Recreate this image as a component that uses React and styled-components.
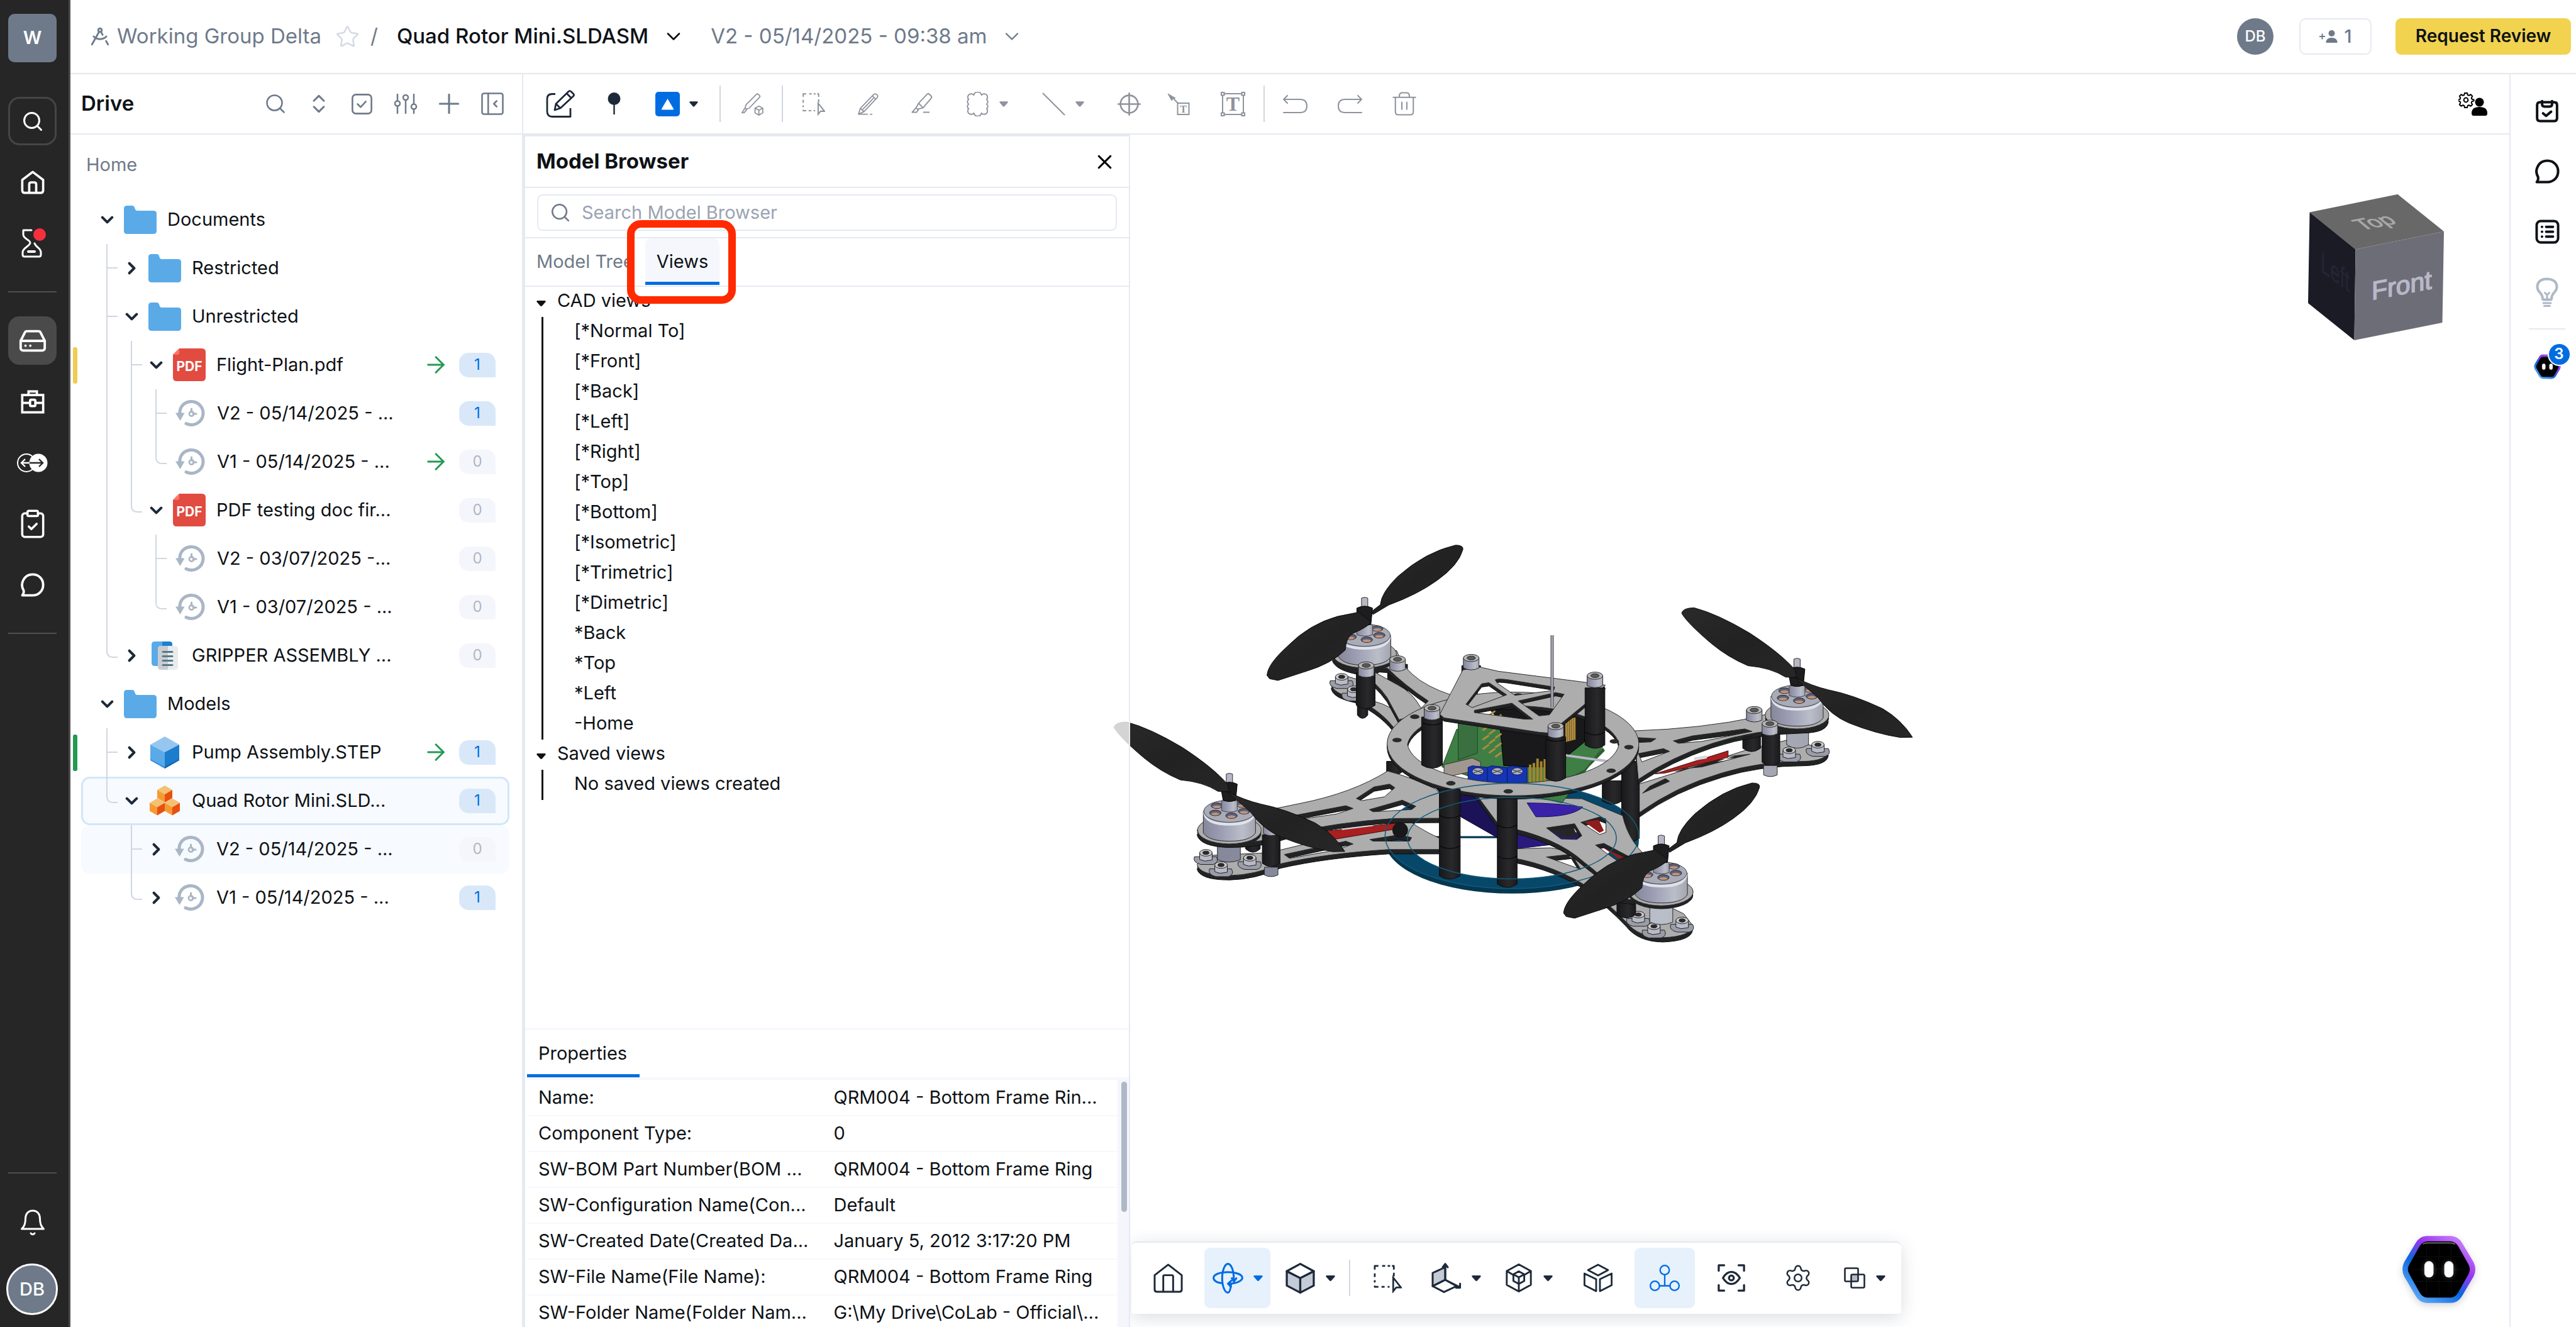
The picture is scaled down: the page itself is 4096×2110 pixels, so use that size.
import React, { useState } from 'react';
import styled, { createGlobalStyle } from 'styled-components';
import {
  Search,
  HardDrive,
  ClipboardCheck,
  Star,
  ChevronDown,
  ChevronRight,
  ChevronsUpDown,
  Plus,
  X,
  ArrowRight,
  DraftingCompass,
  Settings,
} from 'lucide-react';

const GlobalStyle = createGlobalStyle`
  * {
    box-sizing: border-box;
  }
  body {
    margin: 0;
    background: #ffffff;
    color: #0e1216;
    font-family: Inter, 'Liberation Sans', sans-serif;
    font-size: 29px;
    line-height: 1.2;
  }
  button, input {
    font: inherit;
    color: inherit;
    border: 0;
    padding: 0;
    background: none;
  }
  ul {
    list-style: none;
    margin: 0;
    padding: 0;
  }
  svg {
    display: block;
    flex: none;
  }
`;

const Shell = styled.div`
  display: flex;
  height: 100vh;
  overflow: hidden;
`;

/* ---------- left rail ---------- */

const Rail = styled.nav`
  flex: none;
  display: flex;
  flex-direction: column;
  width: 112px;
  padding: 22px 19px 19px 13px;
  background: #262626;
  border-right: 3px solid #4a4a4a;
  color: #ffffff;
`;

const Logo = styled.button`
  width: 77px;
  height: 77px;
  margin-bottom: 55px;
  border-radius: 10px;
  background: #6e7a8a;
  font-size: 29px;
  font-weight: 600;
`;

const RailGroup = styled.div`
  display: flex;
  flex-direction: column;
  gap: 20px;
`;

const RailButton = styled.button`
  display: flex;
  align-items: center;
  justify-content: center;
  width: 77px;
  height: 77px;
  border-radius: 18px;
  border: 3px solid ${(p) => (p.$outlined ? '#454545' : 'transparent')};
  background: ${(p) => (p.$active ? '#4a4a4a' : 'transparent')};
  background-clip: border-box;
`;

const RailDivider = styled.hr`
  width: 77px;
  margin: ${(p) => (p.$last ? '0 0 39px' : '38px 0')};
  border: 0;
  border-top: 2px solid #4f4f4f;
`;

const RailFoot = styled.div`
  margin-top: auto;
  display: flex;
  flex-direction: column;
`;

const RailAvatar = styled.button`
  width: 82px;
  height: 82px;
  margin: 27px 0 0 -3px;
  border-radius: 50%;
  border: 3px solid #ffffff;
  background: #6e7a8a;
  font-size: 29px;
  font-weight: 500;
`;

/* ---------- header ---------- */

const Main = styled.div`
  flex: 1;
  min-width: 0;
  display: flex;
  flex-direction: column;
`;

const Header = styled.header`
  flex: none;
  display: flex;
  align-items: center;
  height: 118px;
  padding: 0 8px 0 30px;
  border-bottom: 2px solid #e6e7e8;
  font-size: 33px;
`;

const GroupLink = styled.a`
  display: flex;
  align-items: center;
  gap: 10px;
  color: #6e7a8a;
  text-decoration: none;
`;

const StarButton = styled.button`
  margin: 0 17px 0 22px;
  color: #d3d9e4;
`;

const Slash = styled.span`
  margin-right: 30px;
  color: #6e7a8a;
`;

const Picker = styled.button`
  display: flex;
  align-items: center;
  gap: 22px;
  margin-right: 41px;
  font-weight: ${(p) => (p.$muted ? 400 : 500)};
  color: ${(p) => (p.$muted ? '#6e7a8a' : '#0e1216')};
`;

const HeaderEnd = styled.div`
  display: flex;
  align-items: center;
  margin-left: auto;
  font-size: 29px;
`;

const Avatar = styled.span`
  display: flex;
  align-items: center;
  justify-content: center;
  width: 58px;
  height: 58px;
  margin-right: 41px;
  border-radius: 50%;
  background: #6e7a8a;
  color: #ffffff;
  font-size: 24px;
  font-weight: 500;
`;

const InviteButton = styled.button`
  display: flex;
  align-items: center;
  justify-content: center;
  gap: 10px;
  width: 115px;
  height: 58px;
  margin-right: 38px;
  border: 2px solid #e6e9f1;
  border-radius: 10px;
  color: #6e7a8a;
  font-weight: 500;
`;

const ReviewButton = styled.button`
  width: 279px;
  height: 58px;
  border-radius: 9px;
  background: #f1d350;
  font-size: 28px;
  font-weight: 600;
`;

const Body = styled.div`
  flex: 1;
  min-height: 0;
  display: flex;
`;

/* ---------- drive panel ---------- */

const Drive = styled.aside`
  flex: none;
  display: flex;
  flex-direction: column;
  width: 720px;
  border-right: 2px solid #e6e9f1;
`;

const DriveBar = styled.div`
  flex: none;
  display: flex;
  align-items: center;
  height: 96px;
  padding: 0 13px 0 17px;
  border-bottom: 2px solid #e6e9f1;
`;

const DriveTitle = styled.h2`
  margin: 0 auto 0 0;
  font-size: 33px;
  font-weight: 600;
`;

const DriveAction = styled.button`
  display: flex;
  justify-content: center;
  width: 69px;
  color: #6e7a8a;
`;

const HomeLink = styled.a`
  padding: 31px 25px;
  color: #6e7a8a;
  text-decoration: none;
`;

const Tree = styled.ul`
  padding: 0 20px 0 17px;
`;

const TreeRow = styled.li`
  position: relative;
  display: flex;
  align-items: center;
  height: 77px;
  padding: 0 22px;
  border-radius: 14px;
  background: ${(p) => (p.$state ? '#f7fafe' : 'transparent')};
  box-shadow: ${(p) =>
    p.$state === 'selected' ? 'inset 0 0 0 3px #d2e6f9' : 'none'};
`;

const StatusBar = styled.span`
  position: absolute;
  left: -13px;
  top: 10px;
  width: 7px;
  height: 58px;
  border-radius: 3px;
  background: ${(p) => p.$color};
`;

const GuideCell = styled.span`
  flex: none;
  align-self: stretch;
  width: 39px;
  color: #d0d7e2;
`;

const Toggle = styled.button`
  display: flex;
  justify-content: center;
  width: 38px;
  color: #1d2939;
`;

const FileIcon = styled.span`
  display: flex;
  justify-content: center;
  width: 52px;
  margin: 0 17px 0 8px;
`;

const FileName = styled.span`
  flex: 1;
  white-space: nowrap;
`;

const Count = styled.span`
  display: flex;
  align-items: center;
  justify-content: center;
  width: 58px;
  height: 39px;
  margin-left: 16px;
  border-radius: 15px 15px 0 15px;
  background: ${(p) => (p.$on ? '#d8e8f9' : '#f4f6fb')};
  color: ${(p) => (p.$on ? '#006ce2' : '#aeb8c6')};
  font-size: 24px;
`;

/* ---------- workspace ---------- */

const Workspace = styled.section`
  flex: 1;
  min-width: 0;
  display: flex;
  flex-direction: column;
`;

const Toolbar = styled.div`
  flex: none;
  display: flex;
  align-items: center;
  height: 96px;
  padding: 0 34px 0 12px;
  border-bottom: 2px solid #e6e9f1;
`;

const Tool = styled.button`
  display: flex;
  align-items: center;
  justify-content: flex-start;
  gap: 15px;
  width: ${(p) => (p.$menu ? 121 : p.$tight ? 77 : 87)}px;
  padding-left: ${(p) => (p.$tight ? 16 : 24)}px;
  color: ${(p) => (p.$dark ? '#1d2939' : '#8e939c')};
`;

const ToolDivider = styled.span`
  width: 2px;
  height: 58px;
  margin: ${(p) => (p.$wide ? '0' : '0 5px')};
  background: #d0d7e2;
`;

const UserTool = styled.button`
  margin-left: auto;
  color: #000000;
`;

const Split = styled.div`
  flex: 1;
  min-height: 0;
  display: flex;
`;

const Panel = styled.section`
  position: relative;
  z-index: 1;
  flex: none;
  display: flex;
  flex-direction: column;
  width: 965px;
  border: 2px solid #e6e9f1;
  border-width: 3px 2px 0 3px;
  background: rgba(255, 255, 255, 0.8);
`;

const PanelHead = styled.div`
  display: flex;
  align-items: center;
  justify-content: space-between;
  height: 82px;
  padding: 0 20px 0 18px;
  border-bottom: 2px solid #e6e9f1;
`;

const PanelTitle = styled.h2`
  margin: 0;
  font-size: 33px;
  font-weight: 700;
`;

const SearchRow = styled.div`
  padding: 10px 19px;
  border-bottom: 2px solid #e6e9f1;
`;

const SearchBox = styled.label`
  display: flex;
  align-items: center;
  gap: 17px;
  height: 58px;
  padding: 0 18px;
  border: 2px solid #e6e9f1;
  border-radius: 9px;
  color: #6e7a8a;
`;

const SearchInput = styled.input`
  flex: 1;
  outline: 0;
  &::placeholder {
    color: #9aa3b2;
    opacity: 1;
  }
`;

const Tabs = styled.div`
  position: relative;
  display: flex;
  height: 77px;
  padding-bottom: 1px;
  border-bottom: 2px solid #e6e9f1;
`;

const Tab = styled.button`
  padding: 5px 18px 0;
  border-radius: 10px 10px 0 0;
  border-bottom: 5px solid ${(p) => (p.$active ? '#006ce2' : 'transparent')};
  background: ${(p) => (p.$active ? '#f5f7fc' : 'transparent')};
  color: ${(p) => (p.$active ? '#0e1216' : '#6e7a8a')};
`;

const Highlight = styled.span`
  position: absolute;
  left: 162px;
  top: -29px;
  width: 173px;
  height: 133px;
  border: 12px solid #ff2a00;
  border-radius: 22px;
  pointer-events: none;
`;

const ViewList = styled.div`
  flex: 1;
  min-height: 0;
  padding: 0 17px;
`;

const ViewGroup = styled.button`
  display: flex;
  align-items: center;
  gap: 17px;
  height: 48px;
  padding-bottom: 3px;
`;

const GroupCaret = styled.span`
  padding-top: 8px;
`;

const ViewItems = styled.ul`
  margin-left: 9px;
  border-left: 3px solid #0e1216;
`;

const ViewItem = styled.li`
  height: 48px;
  padding-left: 49px;
  line-height: 43px;
`;

const Props = styled.div`
  flex: none;
  height: 476px;
  overflow: hidden;
  padding-left: 3px;
  border-top: 4px solid #f7f8fd;
`;

const PropTabs = styled.div`
  display: flex;
  height: 79px;
  border-bottom: 4px solid #f7f8fd;
`;

const PropTab = styled.button`
  width: 179px;
  padding: 5px 0 0 18px;
  border-bottom: 5px solid #006ce2;
  text-align: left;
`;

const PropBody = styled.div`
  display: flex;
  align-items: stretch;
`;

const PropTable = styled.table`
  flex: 1;
  table-layout: fixed;
  border-collapse: collapse;
  tr {
    height: 57px;
    border-bottom: 2px solid #f7f8fd;
  }
  th,
  td {
    width: 50%;
    padding: 0 0 0 18px;
    font-weight: 400;
    text-align: left;
    white-space: nowrap;
  }
`;

const ScrollTrack = styled.div`
  width: 18px;
  padding: 3px 3px 0 6px;
  background: #f4f6fc;
`;

const ScrollThumb = styled.div`
  height: 207px;
  border-radius: 5px;
  background: #aeb8c6;
`;

const Stage = styled.div`
  position: relative;
  flex: 1;
  min-width: 0;
`;

const ModelDrawing = styled.svg`
  position: absolute;
  left: -29px;
  top: 622px;
  path,
  ellipse,
  line,
  rect {
    vector-effect: non-scaling-stroke;
  }
`;

const CubeDrawing = styled.svg`
  position: absolute;
  right: 103px;
  top: 95px;
`;

const Dock = styled.div`
  position: absolute;
  left: 2px;
  bottom: 21px;
  display: flex;
  align-items: center;
  gap: 10px;
  padding: 8px 10px 9px;
  border-top: 2px solid #e4e8f0;
  border-radius: 8px 8px 4px 4px;
  background: #ffffff;
  box-shadow: 0 6px 28px rgba(30, 41, 70, 0.16);
`;

const DockButton = styled.button`
  display: flex;
  align-items: center;
  justify-content: center;
  gap: 16px;
  width: ${(p) => (p.$menu ? 105 : 96)}px;
  height: 96px;
  border-radius: 9px;
  background: ${(p) => (p.$active ? '#e6f1fc' : 'transparent')};
  color: ${(p) => (p.$active ? '#006ce2' : '#1d2939')};
`;

const Assistant = styled.button`
  position: absolute;
  right: 53px;
  bottom: 37px;
  filter: drop-shadow(0 4px 6px rgba(0, 0, 0, 0.16));
`;

/* ---------- right rail ---------- */

const SideRail = styled.aside`
  flex: none;
  display: flex;
  flex-direction: column;
  align-items: center;
  width: 106px;
  padding: 20px 0 0 12px;
  border-left: 2px solid #e6e9f1;
`;

const SideButton = styled.button`
  position: relative;
  display: flex;
  align-items: center;
  justify-content: center;
  width: 77px;
  height: 77px;
  margin-bottom: 19px;
  color: ${(p) => (p.$off ? '#aeb8c6' : '#0e1216')};
`;

const SideDivider = styled.hr`
  width: 58px;
  margin: 0 0 20px;
  border: 0;
  border-top: 2px solid #e6e9f1;
`;

const Badge = styled.span`
  position: absolute;
  right: 1px;
  top: 1px;
  width: 37px;
  height: 37px;
  border: 2px solid #ffffff;
  border-radius: 50%;
  background: #006ce2;
  color: #ffffff;
  font-size: 24px;
  font-weight: 600;
  line-height: 32px;
`;

/* ---------- icons ---------- */

const Icon = ({ size = 38, width, height, box = 24, sw = 1.5, children }) => (
  <svg
    width={width || size}
    height={height || size}
    viewBox={`0 0 ${box} ${box}`}
    fill="none"
    stroke="currentColor"
    strokeWidth={sw}
    strokeLinecap="round"
    strokeLinejoin="round"
    aria-hidden="true"
  >
    {children}
  </svg>
);

const Caret = ({ size = 15 }) => (
  <svg width={size} height="9" viewBox="0 0 15 9" fill="currentColor">
    <path d="M1.5 0h12q2 .6.8 2.2L9 8.2q-1.500 1.500-3 0L.7 2.200Q-.5.6 1.500 0z" />
  </svg>
);

const FolderIcon = () => (
  <svg width="52" height="45" viewBox="0 0 52 45" fill="#5aaae8">
    <path d="M5 0h8q3 0 4 3l1 3q.8 2 3 2h26q5 0 5 5v27q0 5-5 5H5q-5 0-5-5V5q0-5 5-5z" />
  </svg>
);

const PdfIcon = () => (
  <svg width="52" height="52" viewBox="0 0 52 52">
    <path d="M10 0h36q6 0 6 6v40q0 6-6 6H6q-6 0-6-6V10z" fill="#e14b40" />
    <path d="M10 0v7q0 3-3 3H0z" fill="#ff7468" />
    <text
      x="26"
      y="36"
      textAnchor="middle"
      fill="#fff"
      fontFamily="Inter, sans-serif"
      fontWeight="700"
      fontSize="21"
    >
      PDF
    </text>
  </svg>
);

const HistoryIcon = () => (
  <svg width="47" height="42" viewBox="0 0 47 42" fill="none">
    <path
      d="M7 22C6 10 15 2.500 25.500 2.500A18.500 18.500 0 0 1 25.500 39.500Q21 39.500 17 37.500"
      stroke="#a9b6c5"
      strokeWidth="5"
      strokeLinecap="round"
    />
    <path d="M0 20.500h14.500L7.500 33z" fill="#a9b6c5" />
    <circle cx="25.500" cy="22" r="3.600" stroke="#a9b6c5" strokeWidth="2.600" />
    <path
      d="M25.500 14v5M28 22h5"
      stroke="#a9b6c5"
      strokeWidth="3"
      strokeLinecap="round"
    />
  </svg>
);

const DocSetIcon = () => (
  <svg width="42" height="45" viewBox="0 0 42 45">
    <path d="M5 0h23q5 0 5 5v34H5q-5 0-5-5V5q0-5 5-5z" fill="#5aaae8" />
    <path d="M17 0h11q5 0 5 5v4H17z" fill="#1f80d0" />
    <rect x="10" y="7" width="32" height="38" rx="5" fill="#e8ecef" />
    <path d="M26 7H15q-5 0-5 5v28q0 5 5 5h11z" fill="#c9cdd1" />
    <path
      d="M18 16.500h15M18 23.500h15M18 30.500h15M18 37.500h15"
      stroke="#577a86"
      strokeWidth="3"
      strokeLinecap="round"
    />
  </svg>
);

const PartIcon = () => (
  <svg width="46" height="51" viewBox="0 0 46 51">
    <path d="M23 0 46 13 23 25 0 13z" fill="#96c6ef" />
    <path d="M0 13 23 25v26L0 38z" fill="#5aaae8" />
    <path d="M46 13 23 25v26l23-13z" fill="#1b7dcc" />
    <path d="M0 36 23 48v3L0 38z" fill="#3c95df" />
    <path d="M46 36 23 48v3l23-13z" fill="#1566ad" />
  </svg>
);

const MiniCube = ({ x, y }) => (
  <g transform={`translate(${x} ${y})`}>
    <path d="M12 0 24 7 12 14 0 7z" fill="#f4c172" />
    <path d="M0 7 12 14v13L0 20z" fill="#f59a33" />
    <path d="M24 7 12 14v13l12-7z" fill="#e8500f" />
  </g>
);

const AssemblyIcon = () => (
  <svg width="48" height="48" viewBox="0 0 48 48">
    <MiniCube x={12} y={0} />
    <MiniCube x={0} y={20.500} />
    <MiniCube x={24} y={20.500} />
  </svg>
);

const Bubble = ({ size = 38, sw = 2.4 }) => (
  <Icon size={size} sw={sw}>
    <path d="M12 1.500c6 0 10.500 4.500 10.500 10.500S18 22.500 12 22.500H1.600c1.400-1.600 1.800-3 1.200-5.200A10.500 10.500 0 0 1 12 1.500z" />
  </Icon>
);

const BellIcon = () => (
  <svg
    width="40"
    height="42"
    viewBox="0 0 40 42"
    fill="none"
    stroke="#fff"
    strokeWidth="3"
    strokeLinecap="round"
    strokeLinejoin="round"
  >
    <path d="M2.500 31C7 27 8.500 22 8.500 15 8.500 7 13 2 20 2s11.500 5 11.500 13c0 7 1.500 12 6 16z" />
    <path d="M17 38q3 3.500 6 0" />
  </svg>
);

const Hourglass = () => (
  <svg
    width="42"
    height="47"
    viewBox="0 0 42 47"
    fill="none"
    stroke="#fff"
    strokeWidth="3"
    strokeLinecap="round"
    strokeLinejoin="round"
  >
    <path d="M19 3H6v7c0 7 11 8 11 13S5 31 5 38v4q0 3 3 3h23q3 0 3-3v-4c0-6-8-8-10-14" />
    <path d="M14 37h10" strokeWidth="4" />
    <circle cx="32" cy="10" r="10" fill="#f5303e" stroke="none" />
  </svg>
);

const Briefcase = () => (
  <Icon size={40} sw={2.2}>
    <path d="M8 5V2h8v3M2 5.500h20V22H2zM2 13h7M15 13h7" strokeLinejoin="miter" />
    <rect x="9.500" y="10" width="5" height="6" rx="1" />
  </Icon>
);

const CompareIcon = () => (
  <svg width="49" height="30" viewBox="0 0 49 30" fill="none">
    <circle cx="15" cy="15" r="14" stroke="#fff" strokeWidth="2" />
    <circle cx="34" cy="15" r="14.500" fill="#fff" />
    <path d="M20 15H8M13 9l-6 6 6 6" stroke="#fff" strokeWidth="2.400" />
    <path d="M20 15h20M35 9l6 6-6 6" stroke="#262626" strokeWidth="2.400" />
  </svg>
);

const SlidersIcon = () => (
  <svg
    width="38"
    height="32"
    viewBox="0 0 38 32"
    fill="none"
    stroke="currentColor"
    strokeWidth="2.500"
    strokeLinecap="round"
  >
    <path d="M6 1v10M6 20v11M19 11v20M32 1v15M32 25v6" />
    <circle cx="6" cy="15.500" r="4" />
    <circle cx="19" cy="6" r="4" />
    <circle cx="32" cy="20.500" r="4" />
  </svg>
);

const CollapseIcon = () => (
  <Icon size={36} sw={1.700}>
    <rect x="1" y="1" width="22" height="22" rx="2" />
    <path d="M7.500 1v22M16.500 9l-3 3 3 3" />
  </Icon>
);

const InviteIcon = () => (
  <svg width="30" height="20" viewBox="0 0 30 20" fill="currentColor">
    <path d="M1 9h3.500V5.500h2V9H10v2H6.500v3.500h-2V11H1z" />
    <circle cx="20.500" cy="5" r="5" />
    <path d="M11.500 20q0-8 9-8t9 8z" />
  </svg>
);

const GearPath =
  'M10 1h4l.8 3 2 .9L19.600 3.300l2.600 2.600-1.500 2.800.8 2 3 .9v1.800l-3 1-.8 2 1.500 2.800-2.600 2.500-2.800-1.500-2 .8-.8 3h-4l-.8-3-2-.8-2.800 1.500-2.600-2.500 1.500-2.800-.8-2-3-1v-1.800l3-.9.8-2-1.500-2.800L4.400 3.300l2.800 1.600 2-.9z';

const UserGearIcon = () => (
  <svg width="47" height="37" viewBox="0 0 47 37">
    <g fill="none" stroke="#000" strokeWidth="2">
      <path d={GearPath} />
      <circle cx="12" cy="12" r="3.400" />
    </g>
    <circle cx="33.500" cy="15.500" r="7" />
    <path d="M21 33q0-10 12.500-10T46 33q0 4-3 4H24q-3 0-3-4z" />
  </svg>
);

const EditIcon = () => (
  <svg
    width="46"
    height="44"
    viewBox="0 0 46 44"
    fill="none"
    stroke="currentColor"
    strokeWidth="2.800"
    strokeLinejoin="round"
  >
    <path d="M15 6.500H10Q2 6.500 2 14v20q0 8.500 8 8.500h29V29" />
    <path d="M16 22 36 2.500q2-2 4.500.5l3 3q2 2 0 4L23 29l-9 3zM16 22l7 7M33 5.500l7.500 7.500" />
  </svg>
);

const PinIcon = () => (
  <svg width="39" height="36" viewBox="0 0 39 36">
    <ellipse cx="21.500" cy="10" rx="10" ry="10" fill="currentColor" />
    <path d="M21.500 18v17" stroke="currentColor" strokeWidth="2.400" />
  </svg>
);

const MarkupIcon = () => (
  <svg width="39" height="39" viewBox="0 0 39 39">
    <rect width="39" height="39" rx="5" fill="#006ce2" />
    <path d="M19.500 11 29 27q.5 1.500-1 1.500H11q-1.500 0-1-1.500z" fill="#fff" />
  </svg>
);

const Marker3dIcon = () => (
  <Icon size={39} sw={1.100}>
    <path d="M7 12.500 17 2.500q1-1 2 0l1 1q1 1 0 2L10 16l-3 .8-1-1zM5.800 16 3 20.500h2l2.500-3" />
    <path d="m19.500 14 3.800 2v4.600l-3.800 2.200-3.800-2.200V16zM15.700 16l3.800 2 3.800-2M19.500 18v4.500" />
  </Icon>
);

const SelectIcon = ({ size = 38, sw = 1.300 }) => (
  <Icon size={size} sw={sw}>
    <path
      d="M2 5V2h3M8 2h2.500M12.500 2h2M17.500 5V2h-1.500M17.500 7.500v3M2 8v3M2 13.500v2M2 18v1h3M7.500 19h2.500M12.500 19h1.500"
      strokeLinecap="butt"
    />
    <path d="M17 11.500v11l2.500-3h3.800z" strokeLinejoin="miter" />
  </Icon>
);

const PencilIcon = () => (
  <Icon size={38} sw={1.100}>
    <path d="m4.500 16.500 13.500-14q1.500-1 3 .3t.4 3L8 20l-5.500 2.500zM4.500 16.500 8 20M16.500 4l3.500 3.500M7 17.500 17.500 6.500M2.500 22.500h9M14.500 22.500h1.500" />
  </Icon>
);

const HighlighterIcon = () => (
  <Icon size={38} sw={1.200}>
    <path d="M8 11.500 16.500 2.500q1.200-1.200 2.400 0l1.600 1.600q1.200 1.200 0 2.400L12.500 16 7 17.500 5.500 16zM5.500 16 1.500 20.500h4.500l2-3M8 11.500l4.500 4.500M13 20.500h5.500" />
  </Icon>
);

const CloudIcon = () => (
  <Icon size={39} sw={1.200}>
    <path d="M3.200 7.500A3.300 3.300 0 1 1 8.200 3.200 3.900 3.900 0 0 1 15.800 3.200 3.300 3.300 0 1 1 20.800 7.500 2.700 2.700 0 0 1 20.800 12 2.700 2.700 0 0 1 20.800 16.500 3.300 3.300 0 1 1 15.800 20.800 3.900 3.900 0 0 1 8.200 20.800 3.300 3.300 0 1 1 3.200 16.500 2.700 2.700 0 0 1 3.200 12 2.700 2.700 0 0 1 3.200 7.500z" />
  </Icon>
);

const LineIcon = () => (
  <Icon size={39} sw={1.200}>
    <path d="M1.500 1.500 22.500 22.500" />
  </Icon>
);

const CrossIcon = () => (
  <Icon size={37} sw={1.700}>
    <circle cx="12" cy="12" r="9" />
    <path d="M12 .8v22.400M.8 12h22.400" />
  </Icon>
);

const LetterT = ({ x, y, size }) => (
  <text
    x={x}
    y={y}
    textAnchor="middle"
    fill="currentColor"
    stroke="none"
    fontFamily="Liberation Serif, serif"
    fontWeight="700"
    fontSize={size}
  >
    T
  </text>
);

const LeaderIcon = () => (
  <svg width="36" height="36" viewBox="0 0 36 36" fill="none" stroke="currentColor">
    <path d="M10 10 17 17" strokeWidth="2" />
    <path d="M1 2 13 9l-4 1-2 3z" fill="currentColor" />
    <rect x="16.500" y="17" width="18" height="18" strokeWidth="2" />
    <LetterT x={25.500} y={31.500} size={16} />
  </svg>
);

const TextBoxIcon = () => (
  <svg
    width="39"
    height="39"
    viewBox="0 0 39 39"
    fill="none"
    stroke="currentColor"
    strokeWidth="2"
  >
    <rect x="3" y="3" width="33" height="33" />
    <g fill="#fff">
      <rect x="1" y="1" width="4.500" height="4.500" />
      <rect x="33.500" y="1" width="4.500" height="4.500" />
      <rect x="1" y="33.500" width="4.500" height="4.500" />
      <rect x="33.500" y="33.500" width="4.500" height="4.500" />
    </g>
    <LetterT x={19.500} y={30} size={32} />
  </svg>
);

const UndoIcon = ({ flip }) => (
  <svg
    width="39"
    height="29"
    viewBox="0 0 39 29"
    fill="none"
    stroke="currentColor"
    strokeWidth="2"
    strokeLinecap="round"
    strokeLinejoin="round"
  >
    <path
      transform={flip ? 'translate(39 0) scale(-1 1)' : undefined}
      d="M7 1 1 7l6 6M1 7h26q11 0 11 10.500T27 28H1"
    />
  </svg>
);

const TrashIcon = () => (
  <Icon size={38} sw={1.300}>
    <path d="M.8 5.500h22.400M3 5.500V20q0 3 3 3h12q3 0 3-3V5.500M7 5.500V4q0-3 3-3h4q3 0 3 3v1.500M9.500 10.500v7M14.500 10.500v7" />
  </Icon>
);

const DockHome = () => (
  <Icon size={47} sw={1.500}>
    <path d="M1 9.500 12 1l11 8.500V21q0 2-2 2H3q-2 0-2-2zM8 22.500v-12q0-1 1-1h6q1 0 1 1v12" />
  </Icon>
);

const OrbitIcon = () => (
  <Icon size={49} sw={1.500}>
    <path d="M14.500 16.500q-.8 6.700-2.500 6.700C9.500 23.200 7.500 18 7.500 12S9.500.8 12 .8s4.500 5 4.500 11v2M15 12l1.600 2.600 1.900-2.600" />
    <path d="M7 15.800C3.500 15.300.8 13.800.8 11.600.8 9 6 7.200 12 7.200s11.200 1.900 11.200 4.400-5 4.600-11 4.600M14.600 13.900 12 16.200l2.300 2.500" />
  </Icon>
);

const SolidCube = () => (
  <Icon size={49} sw={1.600}>
    <path d="M1.500 6.500 12 11.800v11.400L1.500 17.700z" fill="#c5cbd6" />
    <path d="M22.500 6.500 12 11.800v11.400l10.500-5.500z" fill="#c5cbd6" />
    <path d="M12 .8 22.500 6.500 12 11.800 1.500 6.500z" fill="#fff" />
  </Icon>
);

const SectionIcon = () => (
  <Icon size={48} sw={1.500}>
    <path d="M1 8 11 3.500v10L1 18.500z" fill="#c5cbd6" />
    <path d="M1 18.500 11 13.500l9 5L10 23.200z" />
    <path d="M11 13.500V1M9 3.500 11 .8l2 2.700M11 13.500l11.500 5.800M22.800 16.500v3.300h-3.200" />
  </Icon>
);

const LayerCube = () => (
  <Icon size={46} sw={1.500}>
    <path d="M12 .8 22 6.300v11.400L12 23.200 2 17.700V6.300zM2 6.300l5 2.900M22 6.300l-5 2.900M12 17v6" />
    <path d="M7.500 9 12 6.500 16.500 9v5.500L12 17l-4.500-2.500zM7.500 9l4.500 2.500L16.500 9M12 11.500V17" />
  </Icon>
);

const ExplodeIcon = () => (
  <Icon size={48} sw={1.400}>
    <path d="M12 1.500 20 5.700 12 10 4 5.700z" />
    <path d="M1.200 8.500 10.500 13v9.500L1.200 17.700zM22.800 8.500 13.500 13v9.500l9.300-4.800z" />
  </Icon>
);

const NodesIcon = () => (
  <Icon size={50} sw={1.100}>
    <circle cx="12" cy="6" r="3.500" />
    <circle cx="4.500" cy="18" r="3.500" />
    <circle cx="19.500" cy="18" r="3.500" />
    <path d="M12 9.500V18M8 18h8" />
  </Icon>
);

const FocusIcon = () => (
  <Icon size={46} sw={1.700}>
    <path d="M1.500 6V1.500H6M18 1.500h4.500V6M22.500 18v4.500H18M6 22.500H1.500V18" />
    <path d="M5 12q3-5 7-5t7 5q-3 5-7 5t-7-5z" />
    <circle cx="12" cy="12" r="2" />
  </Icon>
);

const OverlapIcon = () => (
  <svg
    width="35"
    height="35"
    viewBox="0 0 35 35"
    fill="none"
    stroke="currentColor"
    strokeWidth="2.600"
  >
    <rect x="11" y="11.500" width="11" height="11" fill="#b4bac6" stroke="none" />
    <rect x="1.500" y="1.500" width="21" height="21" rx="2" />
    <rect x="11.500" y="11.500" width="21" height="21" rx="2" />
  </svg>
);

const TaskIcon = () => (
  <Icon size={38} sw={2.500}>
    <path d="M5 2.800h14q3 0 3 3v13q0 3-3 3H5q-3 0-3-3v-13q0-3 3-3zM7 1.800v3q0 2.500 2.500 2.500h5q2.500 0 2.500-2.500v-3M8 14l3 2.600 5-4.200" />
  </Icon>
);

const ListIcon = () => (
  <Icon size={39} sw={2.400}>
    <rect x="1.500" y="1.500" width="21" height="21" rx="4" />
    <path d="M6.700 7.200h.1M6.700 12h.1M6.700 16.800h.1M10.800 7.200h6.700M10.800 12h6.700M10.800 16.800h6.700" />
  </Icon>
);

const BulbIcon = () => (
  <svg
    width="36"
    height="48"
    viewBox="0 0 36 48"
    fill="none"
    stroke="currentColor"
    strokeWidth="4"
    strokeLinecap="round"
    strokeLinejoin="round"
  >
    <path d="M11 34q0-5-4-9.500Q2.500 20 2.500 15 3 3 18 2.500 33 3 33.500 15q0 5-4.500 9.500-4 4.500-4 9.500 0 1.500-2 1.500H13q-2 0-2-1.500z" />
    <path d="M18 35v-7l-3.500-3.500M18 28l3.500-3.500M12 41h12M13.500 45.500h9" strokeWidth="3" />
  </svg>
);

const hex =
  'M610 290H756Q800 292 822 332L890 446Q910 488 890 530L822 646Q800 686 756 688H612Q568 686 546 646L478 530Q458 488 478 446L546 332Q568 292 610 290z';
const hexInner =
  'M616 322H752Q782 324 798 350L860 460Q874 488 860 516L798 626Q782 655 752 656H616Q586 655 570 626L508 516Q492 488 508 460L570 350Q586 324 616 322z';

const BotIcon = ({ width, height, id }) => (
  <svg width={width} height={height} viewBox="464 286 440 406">
    <defs>
      <linearGradient id={id} x1="0.85" y1="0.1" x2="0.2" y2="0.95">
        <stop offset="0" stopColor="#c77df8" />
        <stop offset="0.320" stopColor="#9a35f2" />
        <stop offset="0.600" stopColor="#0a68e0" />
        <stop offset="1" stopColor="#5ba8f8" />
      </linearGradient>
      <radialGradient id={`${id}-glow`}>
        <stop offset="0" stopColor="#8a8a8a" />
        <stop offset="1" stopColor="#000" stopOpacity="0" />
      </radialGradient>
    </defs>
    <path d={hex} fill={`url(#${id})`} />
    <path d={hexInner} fill="#000" />
    <path
      d="M611 335v300M684 345v305M757 335v300M520 488h330M545 414h275M545 560h275"
      stroke="#1c1c1c"
      strokeWidth="2"
    />
    <path d="M590 338q10-6 26-6h136q16 0 28 8" stroke="#777" strokeWidth="6" fill="none" />
    <ellipse cx="625" cy="490" rx="62" ry="82" fill={`url(#${id}-glow)`} />
    <ellipse cx="743" cy="490" rx="62" ry="82" fill={`url(#${id}-glow)`} />
    <rect x="598" y="440" width="54" height="97" rx="27" fill="#fff" />
    <rect x="716" y="440" width="54" height="97" rx="27" fill="#fff" />
  </svg>
);

/* ---------- view cube ---------- */

const ViewCube = () => (
  <CubeDrawing width="217" height="233" viewBox="0 0 217 233">
    <path d="M2.500 28.500 142.500 0 216 59 75.500 87.500z" fill="#686868" />
    <path d="M2.500 28.500 75.500 87.500 73.500 232 0 173z" fill="#1b1b26" />
    <path d="M75.500 87.500 216 59 213.500 204 73.500 232z" fill="#6d6d77" />
    <g fontFamily="Liberation Sans, sans-serif">
      <text
        transform="matrix(.98 -.19 .75 .62 86 57)"
        fontSize="36"
        fill="#a8a8a8"
        stroke="#a8a8a8"
      >
        Top
      </text>
      <text
        transform="matrix(1 -.19 0 1 101 168)"
        fontSize="41"
        fill="#b9b7c8"
        stroke="#b9b7c8"
        strokeWidth="1.500"
      >
        Front
      </text>
      <text transform="matrix(.6 .44 0 1 20 122)" fontSize="46" fill="#252536">
        Left
      </text>
    </g>
  </CubeDrawing>
);

/* ---------- quad rotor model ---------- */

const Plate = ({ d, depth = 16 }) => (
  <>
    <path d={d} transform={`translate(0 ${depth})`} fill="#222325" stroke="#0c0c0d" fillRule="evenodd" />
    <path d={d} transform={`translate(0 ${depth / 2})`} fill="#222325" fillRule="evenodd" />
    <path d={d} fill="#adadad" stroke="#2b2b2b" fillRule="evenodd" />
  </>
);

const Post = ({ x, y, h, w = 38 }) => (
  <path
    d={`M${x - w / 2} ${y}V${y + h - 12}Q${x} ${y + h + 12} ${x + w / 2} ${y + h - 12}V${y}z`}
    fill="url(#post)"
    stroke="#0c0c0d"
  />
);

const Bolt = ({ x, y }) => (
  <g transform={`translate(${x} ${y})`} stroke="#2b2b2b">
    <path d="M-15 0V36Q0 50 15 36V0z" fill="url(#metal)" />
    <ellipse rx="15" ry="13" fill="#b9b7b6" />
    <ellipse rx="8" ry="7" fill="#5a5a5e" />
  </g>
);

const Nut = ({ x, y }) => (
  <g transform={`translate(${x} ${y})`} stroke="#232323">
    <path d="M-22 14Q-26 34-10 42H14Q26 34 20 14z" fill="#9a9ca8" />
    <path d="M-12 0v24l10 6 14-4V0z" fill="#b8bac6" />
    <ellipse rx="12" ry="12" fill="#c9c9d0" />
    <ellipse rx="6" ry="6" fill="#2b2b2b" />
  </g>
);

const Motor = ({ x, y }) => (
  <g transform={`translate(${x} ${y})`}>
    <ellipse cy="80" rx="61" ry="50" fill="#222325" />
    <ellipse cy="68" rx="61" ry="50" fill="#adadad" stroke="#2b2b2b" />
    <path d="M-50 0V78Q-40 108 0 108T50 78V0z" fill="url(#metal)" stroke="#2b2b2b" />
    <path d="M-50 -2Q-46 42 0 42T50 -2V8Q46 52 0 52T-50 8z" fill="#dfe2ea" />
    <ellipse rx="49" ry="40" fill="#a9abb6" stroke="#44454c" />
    {[
      [-27, 6],
      [4, 16],
      [28, 0],
      [24, -24],
      [-24, -20],
    ].map(([cx, cy]) => (
      <g key={`${cx}${cy}`}>
        <ellipse cx={cx} cy={cy} rx="11" ry="10" fill="#5d5f78" stroke="#2b2b2b" />
        <ellipse cx={cx} cy={cy + 4} rx="8" ry="5" fill="#c0937c" />
      </g>
    ))}
    <path d="M-15 -38V-2Q0 8 15 -2V-38z" fill="url(#metal)" stroke="#44454c" />
    <path d="M-6 -134V-90H6V-134Q0 -140-6 -134z" fill="#b9b7c4" stroke="#2b2b2b" />
    <path d="M-15 -98V-70L-12 -40Q0 -30 12 -40L15 -98Q0 -112-15 -98z" fill="#1d1d1f" stroke="#000" />
  </g>
);

/* blades swept up to the right */
const PropA = () => (
  <g fill="url(#blade)" stroke="#0c0c0d">
    <path d="M498 308 514 285Q516 240 548 182 600 95 658 70 674 70 672 86 664 142 622 198 585 248 530 286L500 320z" />
    <path d="M297 540Q298 500 336 435 378 355 432 327L472 312 496 345Q494 362 462 388 448 402 447 448 420 498 372 525L318 558 302 552z" />
  </g>
);

/* blades swept down to the right */
const PropB = () => (
  <g fill="url(#blade)" stroke="#0c0c0d">
    <path d="M1312 548 1290 546Q1262 512 1218 505 1180 475 1148 425 1100 348 1091 315 1094 296 1115 296 1160 318 1222 388 1282 462 1308 520z" />
    <path d="M1306 545Q1340 578 1372 592 1420 610 1476 660 1512 700 1533 763L1510 764Q1462 750 1412 712 1376 684 1352 620z" />
  </g>
);

const pins = [0, 1, 2, 3, 4];

const QuadRotor = () => (
  <ModelDrawing width="1302" height="691" viewBox="0 0 1568 1568" preserveAspectRatio="none">
    <defs>
      <linearGradient id="metal">
        <stop offset="0" stopColor="#85879a" />
        <stop offset="0.350" stopColor="#9d9eb4" />
        <stop offset="0.750" stopColor="#babec9" />
        <stop offset="1" stopColor="#a3a6b0" />
      </linearGradient>
      <linearGradient id="post">
        <stop offset="0" stopColor="#18181a" />
        <stop offset="0.600" stopColor="#29292b" />
        <stop offset="1" stopColor="#1a1a1c" />
      </linearGradient>
      <linearGradient id="blade" x1="0" y1="0" x2="1" y2="1">
        <stop offset="0" stopColor="#2a2a2a" />
        <stop offset="0.500" stopColor="#222222" />
        <stop offset="1" stopColor="#272727" />
      </linearGradient>
    </defs>

    {/* highlighted bottom ring */}
    <path
      d="M523 1120V1137A243 190 0 0 0 1009 1137V1120z M566 1127A200 147 0 0 0 966 1127z"
      fill="#053750"
      fillRule="evenodd"
    />
    <path
      d="M523 1119A243 190 0 0 1 1009 1119 243 190 0 0 1 523 1119zM566 1127A200 147 0 0 0 966 1127 200 147 0 0 0 566 1127z"
      fill="#06476a"
      fillRule="evenodd"
    />

    {/* lower arm plates */}
    <Plate d="M420 570Q422 605 465 622 520 670 546 745L562 705Q540 650 500 632L480 560 445 540z" />
    <Plate d="M163 1222Q168 1262 225 1262 275 1260 322 1220 410 1182 530 1168L662 1168V1155Q600 1110 566 1060L300 1180 180 1190zM330 1186 448 1138 462 1148 430 1170 340 1200zM494 1132 550 1115 574 1125 570 1138H500z" />
    <Plate d="M1372 812Q1370 848 1325 850 1240 850 1168 892 1080 940 1010 1035L1004 935Q1100 880 1210 812L1300 770zM1030 940 1060 912 1068 922 1016 965zM1076 880 1150 838 1222 824 1130 870z" />
    <Plate d="M745 1192Q830 1212 900 1290 950 1360 985 1430 1008 1485 1055 1486 1110 1482 1112 1442L1095 1400 930 1250Q900 1180 840 1162L776 1165zM832 1195 880 1185 898 1240z" />
    <Nut x={440} y={545} />
    <Nut x={463} y={590} />
    <Nut x={180} y={1180} />
    <Nut x={264} y={1198} />
    <Nut x={209} y={1224} />
    <Nut x={1297} y={810} />
    <Nut x={1352} y={790} />
    <Nut x={1008} y={1403} />
    <Nut x={1092} y={1424} />
    <Nut x={1038} y={1445} />
    <path d="M202 1140V1205Q224 1222 246 1205V1140zM1292 730V790Q1312 815 1334 790V730zM1030 1370V1430Q1052 1448 1074 1430V1370z" fill="url(#metal)" stroke="#2b2b2b" />

    {/* speed controllers */}
    <path d="M395 1105 550 1072V1092L430 1130 395 1125zM1040 895 1180 812V835L1060 892z" fill="#a8201f" stroke="#4a0a0a" />
    <path d="M440 1092 500 1078M1115 842l24-8" stroke="#d8d8e4" strokeWidth="5" />
    <path d="M935 865l60 22v14l-62-14z" fill="#a8201f" stroke="#4a0a0a" />
    <ellipse cx="552" cy="1098" rx="15" ry="28" fill="#18181a" />

    {/* battery */}
    <path d="M620 945 690 975 780 1080 900 1110 890 1140 775 1165 668 1050z" fill="#1c1258" stroke="#0b0730" />
    <path d="M780 1080 900 1110 880 1140 775 1165z" fill="#2a1a7c" />

    {/* posts behind the frame */}
    <Post x={541} y={850} h={50} w={30} />
    <Post x={585} y={880} h={100} w={30} />
    <Post x={958} y={920} h={85} />
    <Post x={993} y={850} h={290} w={34} />
    <Post x={547} y={500} h={110} />
    <Post x={480} y={640} h={55} w={20} />
    <Post x={1225} y={740} h={75} w={34} />
    <Post x={270} y={1130} h={48} w={28} />
    <Post x={985} y={1350} h={65} w={36} />

    {/* upper arm plates */}
    <Plate d="M422 470Q428 505 470 520 505 560 527 620L550 700 640 650 652 612Q600 580 575 535 556 505 545 450zM500 525 512 512 528 514Q560 575 606 632L592 658Q575 600 548 575z" />
    <Plate d="M163 1098Q168 1142 225 1145 290 1145 340 1110 430 1070 540 1056L662 1055V1035L620 950Q570 905 528 885 460 965 360 1002L275 1035zM468 984 502 942 532 932 542 945 522 978 478 992zM330 1052 448 1010 462 1020 430 1040 342 1064zM493 1024 556 990 582 1012 574 1024 500 1032z" />
    <Plate d="M1372 690Q1370 730 1325 732 1230 735 1150 785 1070 835 1008 915L1000 740Q1130 732 1235 690L1262 675zM1075 776 1112 758 1212 733 1226 742 1130 778 1085 785zM1006 764 1042 768 1032 780 1008 782zM1008 822 1056 804 1068 814 1015 852z" />
    <Plate d="M742 1082Q850 1120 905 1215 942 1265 975 1345L1000 1350 1040 1220Q990 1150 978 1046L900 985 700 975zM832 1090 886 1075 900 1118 890 1132 860 1130zM898 1070 935 1050 946 1058V1106L934 1114zM926 1152 942 1146 1002 1205 995 1222 972 1215z" />
    <path d="M840 1100 884 1088 892 1124 862 1124z" fill="#262628" />
    <path d="M905 1068 932 1060 942 1100 934 1108zM940 1160 990 1205 980 1214z" fill="#8f1c1c" />
    <path d="M795 1000Q850 1000 902 1015 880 1052 812 1050z" fill="#3a22a8" stroke="#160c58" />

    {/* electronics seen through the ring */}
    <path d="M632 870 660 735 712 700 944 785 905 890 862 1000 770 960z" fill="#3f7f45" stroke="#1c4421" />
    <path d="M905 880 940 800 944 812 890 915 870 915z" fill="#2c5f33" />
    <path d="M663 640 700 600V820L663 845z" fill="#3a7040" stroke="#1c4421" />
    <path d="M712 640 860 620 905 690V780L846 870 800 870 750 865 742 700z" fill="#19191b" stroke="#000" />
    <path d="M636 862 690 838 706 852V880L644 905 636 895z" fill="#a09890" stroke="#33302c" />
    <g stroke="#b08c3c" strokeWidth="3">
      {pins.map((i) => (
        <path
          key={i}
          d={`M710 ${670 + i * 34}l12-16M722 ${684 + i * 34}l12-16M734 ${698 + i * 34}l12-16M${870 + i * 4} ${700 - i * 2}v80`}
        />
      ))}
    </g>
    {[682, 719, 757].map((x) => (
      <g key={x} stroke="#0a1560">
        <path d={`M${x} 872l8-6 30 6v64l-38-8z`} fill="#1634b4" />
        <ellipse cx={x + 19} cy="886" rx="11" ry="13" fill="#a9aebd" />
        <path d={`M${x + 10} 880l18 12M${x + 28} 880l-18 12`} stroke="#2b2b2b" />
      </g>
    ))}
    <path d="M868 828 958 852" stroke="#b9b7c8" strokeWidth="4" />
    <g stroke="#a5842f" strokeWidth="4">
      <path d="M801 862v80M808 856v86M815 840v104M822 850v92M829 842v100" />
    </g>

    {/* main ring */}
    <Plate
      depth={12}
      d="M527 787A241 187 0 0 1 1009 787 241 187 0 0 1 527 787zM566 789A203 150 0 0 0 971 789 203 150 0 0 0 566 789z"
    />
    {[
      [580, 689],
      [546, 773],
      [649, 929],
      [759, 958],
      [956, 884],
      [990, 799],
      [778, 612],
      [962, 778],
    ].map(([cx, cy]) => (
      <ellipse key={cx} cx={cx} cy={cy} rx="9" ry="8" fill="#2b2b2b" />
    ))}

    {/* long posts */}
    <Post x={647} y={950} h={325} w={40} />
    <Post x={757} y={985} h={320} />
    <path d="M627 1045q20 20 40 0M627 1155q20 20 40 0M738 1080q19 20 38 0M738 1192q19 20 38 0" fill="none" stroke="#000" />
    <Post x={486} y={530} h={130} w={36} />
    <Post x={1262} y={750} h={115} w={34} />
    <Post x={305} y={1115} h={115} w={34} />
    <path d="M292 1232v28q13 12 26 0v-28zM1248 865v34q13 12 26 0v-34z" fill="url(#metal)" stroke="#2b2b2b" />
    <Post x={613} y={690} h={185} w={40} />

    {/* top cross plate */}
    <Post x={688} y={505} h={40} w={36} />
    <Plate
      depth={12}
      d="M672 520 705 510 740 525 895 562 945 575 908 640 838 748 818 745 636 693 628 680zM734 556Q738 550 760 556L848 582 846 594 772 612 738 568zM722 566 756 610 690 656 678 644 708 570zM694 666 766 640 806 698 790 698 694 674zM778 632 850 602 866 608 838 682 818 686z"
    />
    <Post x={925} y={585} h={218} />
    <Post x={850} y={762} h={160} />
    <path d="M906 745q19 20 38 0M831 770q19 16 38 0M596 712q17 14 36 0" fill="none" stroke="#000" />
    <Bolt x={688} y={477} />
    <Bolt x={925} y={541} />
    <Bolt x={613} y={658} />
    <Bolt x={850} y={723} />
    <path d="M843 395v260" stroke="#44444c" strokeWidth="5" />
    <path d="M843 395v260" stroke="#a9a8b8" strokeWidth="3" />

    <g fill="none" stroke="#155a78" strokeWidth="1.500">
      <ellipse cx="766" cy="1119" rx="243" ry="190" />
      <ellipse cx="766" cy="1127" rx="200" ry="147" />
    </g>

    {/* motors and props */}
    <Motor x={484} y={395} />
    <Motor x={1312} y={615} />
    <Motor x={225} y={1030} />
    <Motor x={1052} y={1253} />
    <Bolt x={547} y={482} />
    <Bolt x={487} y={504} />
    <Bolt x={1230} y={665} />
    <Bolt x={1260} y={714} />
    <Bolt x={305} y={1075} />
    <PropA />
    <PropB />
    <g transform="translate(-1087 412)">
      <PropB />
    </g>
    <g transform="translate(568 858)">
      <PropA />
    </g>
  </ModelDrawing>
);

/* ---------- data ---------- */

const files = [
  { name: 'Documents', icon: FolderIcon, open: true, guides: [] },
  { name: 'Restricted', icon: FolderIcon, open: false, guides: ['tee'] },
  { name: 'Unrestricted', icon: FolderIcon, open: true, guides: ['tee'] },
  { name: 'Flight-Plan.pdf', icon: PdfIcon, open: true, guides: ['line', 'tee'], arrow: true, count: 1, bar: '#f2cb50' },
  { name: 'V2 - 05/14/2025 - ...', icon: HistoryIcon, guides: ['line', 'line', 'tee'], count: 1 },
  { name: 'V1 - 05/14/2025 - ...', icon: HistoryIcon, guides: ['line', 'line', 'corner'], arrow: true, count: 0 },
  { name: 'PDF testing doc fir...', icon: PdfIcon, open: true, guides: ['line', 'corner'], count: 0 },
  { name: 'V2 - 03/07/2025 -...', icon: HistoryIcon, guides: ['line', 'none', 'tee'], count: 0 },
  { name: 'V1 - 03/07/2025 - ...', icon: HistoryIcon, guides: ['line', 'none', 'corner'], count: 0 },
  { name: 'GRIPPER ASSEMBLY ...', icon: DocSetIcon, open: false, guides: ['corner'], count: 0 },
  { name: 'Models', icon: FolderIcon, open: true, guides: [] },
  { name: 'Pump Assembly.STEP', icon: PartIcon, open: false, guides: ['tee'], arrow: true, count: 1, bar: '#219a52' },
  { name: 'Quad Rotor Mini.SLD...', icon: AssemblyIcon, open: true, guides: ['corner'], count: 1, state: 'selected' },
  { name: 'V2 - 05/14/2025 - ...', icon: HistoryIcon, open: false, guides: ['none', 'tee'], count: 0, state: 'current' },
  { name: 'V1 - 05/14/2025 - ...', icon: HistoryIcon, open: false, guides: ['none', 'corner'], count: 1 },
];

const cadViews = [
  '[*Normal To]',
  '[*Front]',
  '[*Back]',
  '[*Left]',
  '[*Right]',
  '[*Top]',
  '[*Bottom]',
  '[*Isometric]',
  '[*Trimetric]',
  '[*Dimetric]',
  '*Back',
  '*Top',
  '*Left',
  '-Home',
];

const properties = [
  ['Name:', 'QRM004 - Bottom Frame Rin...'],
  ['Component Type:', '0'],
  ['SW-BOM Part Number(BOM ...', 'QRM004 - Bottom Frame Ring'],
  ['SW-Configuration Name(Con...', 'Default'],
  ['SW-Created Date(Created Da...', 'January 5, 2012 3:17:20 PM'],
  ['SW-File Name(File Name):', 'QRM004 - Bottom Frame Ring'],
  ['SW-Folder Name(Folder Nam...', 'G:\\My Drive\\CoLab - Official\\...'],
];

const guidePaths = {
  none: '',
  line: 'M19 0V77',
  tee: 'M19 0V77M19 38H36',
  corner: 'M19 0V31Q19 41 29 41H36',
};

const Guide = ({ kind }) => (
  <GuideCell>
    <svg width="39" height="77" viewBox="0 0 39 77" fill="none" stroke="currentColor" strokeWidth="2">
      <path d={guidePaths[kind]} />
    </svg>
  </GuideCell>
);

const FileRow = ({ file }) => {
  const Glyph = file.icon;
  const Arrow = file.open ? ChevronDown : ChevronRight;
  return (
    <TreeRow $state={file.state}>
      {file.bar && <StatusBar $color={file.bar} />}
      {file.guides.map((kind, i) => (
        <Guide key={i} kind={kind} />
      ))}
      {file.open !== undefined && (
        <Toggle aria-label={`Toggle ${file.name}`}>
          <Arrow size={31} strokeWidth={3.200} />
        </Toggle>
      )}
      <FileIcon>
        <Glyph />
      </FileIcon>
      <FileName>{file.name}</FileName>
      {file.arrow && <ArrowRight size={42} strokeWidth={1.700} color="#219a52" />}
      {file.count !== undefined && <Count $on={file.count > 0}>{file.count}</Count>}
    </TreeRow>
  );
};

const SideNav = () => (
  <Rail>
    <Logo>W</Logo>
    <RailGroup>
      <RailButton $outlined aria-label="Search">
        <Search size={36} strokeWidth={2} />
      </RailButton>
      <RailButton aria-label="Home">
        <Icon size={38} sw={2.300}>
          <path d="M1.500 9.500 12 1.500l10.500 8V20q0 2.500-2.500 2.500H4q-2.500 0-2.500-2.500zM8.500 22v-8q0-2 2-2h3q2 0 2 2v8" />
        </Icon>
      </RailButton>
      <RailButton aria-label="Pending">
        <Hourglass />
      </RailButton>
    </RailGroup>
    <RailDivider />
    <RailGroup>
      <RailButton $active aria-label="Drive">
        <HardDrive size={46} strokeWidth={2} />
      </RailButton>
      <RailButton aria-label="Toolbox">
        <Briefcase />
      </RailButton>
      <RailButton aria-label="Compare">
        <CompareIcon />
      </RailButton>
      <RailButton aria-label="Tasks">
        <ClipboardCheck size={50} strokeWidth={1.700} />
      </RailButton>
      <RailButton aria-label="Comments">
        <Bubble />
      </RailButton>
    </RailGroup>
    <RailDivider />
    <RailFoot>
      <RailDivider $last />
      <RailButton aria-label="Notifications">
        <BellIcon />
      </RailButton>
      <RailAvatar>DB</RailAvatar>
    </RailFoot>
  </Rail>
);

const TopBar = () => (
  <Header>
    <GroupLink href="#group">
      <DraftingCompass size={34} strokeWidth={2} />
      Working Group Delta
    </GroupLink>
    <StarButton aria-label="Favorite">
      <Star size={39} strokeWidth={1.500} />
    </StarButton>
    <Slash>/</Slash>
    <Picker>
      Quad Rotor Mini.SLDASM
      <ChevronDown size={36} strokeWidth={1.800} />
    </Picker>
    <Picker $muted>
      V2 - 05/14/2025 - 09:38 am
      <ChevronDown size={36} strokeWidth={1.600} />
    </Picker>
    <HeaderEnd>
      <Avatar>DB</Avatar>
      <InviteButton>
        <InviteIcon />1
      </InviteButton>
      <ReviewButton>Request Review</ReviewButton>
    </HeaderEnd>
  </Header>
);

const DrivePanel = () => (
  <Drive>
    <DriveBar>
      <DriveTitle>Drive</DriveTitle>
      <DriveAction aria-label="Search files">
        <Search size={36} strokeWidth={1.700} />
      </DriveAction>
      <DriveAction aria-label="Sort">
        <ChevronsUpDown size={38} strokeWidth={1.900} />
      </DriveAction>
      <DriveAction aria-label="Select">
        <Icon size={33} sw={1.900}>
          <rect x="1" y="1" width="22" height="22" rx="4" />
          <path d="m7 12 3.500 3.500L16.500 9" />
        </Icon>
      </DriveAction>
      <DriveAction aria-label="Filters">
        <SlidersIcon />
      </DriveAction>
      <DriveAction aria-label="Add">
        <Plus size={50} strokeWidth={1.500} />
      </DriveAction>
      <DriveAction aria-label="Collapse">
        <CollapseIcon />
      </DriveAction>
    </DriveBar>
    <HomeLink href="#home">Home</HomeLink>
    <Tree>
      {files.map((file, i) => (
        <FileRow key={i} file={file} />
      ))}
    </Tree>
  </Drive>
);

const MarkupBar = () => (
  <Toolbar>
    <Tool $dark aria-label="Edit"><EditIcon /></Tool>
    <Tool $dark aria-label="Pin"><PinIcon /></Tool>
    <Tool $dark $menu aria-label="Markup"><MarkupIcon /><Caret size={14} /></Tool>
    <ToolDivider />
    <Tool aria-label="3D marker"><Marker3dIcon /></Tool>
    <ToolDivider />
    <Tool aria-label="Select"><SelectIcon /></Tool>
    <Tool aria-label="Pencil"><PencilIcon /></Tool>
    <Tool aria-label="Highlighter"><HighlighterIcon /></Tool>
    <Tool $menu aria-label="Cloud"><CloudIcon /><Caret size={14} /></Tool>
    <Tool $menu aria-label="Line"><LineIcon /><Caret size={14} /></Tool>
    <Tool aria-label="Target"><CrossIcon /></Tool>
    <Tool $tight aria-label="Leader"><LeaderIcon /></Tool>
    <Tool aria-label="Text"><TextBoxIcon /></Tool>
    <ToolDivider />
    <Tool aria-label="Undo"><UndoIcon /></Tool>
    <Tool aria-label="Redo"><UndoIcon flip /></Tool>
    <Tool aria-label="Delete"><TrashIcon /></Tool>
    <UserTool aria-label="User settings"><UserGearIcon /></UserTool>
  </Toolbar>
);

const ModelBrowser = () => {
  const [query, setQuery] = useState('');
  return (
    <Panel>
      <PanelHead>
        <PanelTitle>Model Browser</PanelTitle>
        <button aria-label="Close">
          <X size={37} strokeWidth={2} color="#000" />
        </button>
      </PanelHead>
      <SearchRow>
        <SearchBox>
          <Search size={34} strokeWidth={1.800} />
          <SearchInput
            aria-label="Search Model Browser"
            placeholder="Search Model Browser"
            value={query}
            onChange={(e) => setQuery(e.target.value)}
          />
        </SearchBox>
      </SearchRow>
      <Tabs>
        <Tab>Model Tree</Tab>
        <Tab $active>Views</Tab>
        <Highlight />
      </Tabs>
      <ViewList>
        <ViewGroup>
          <GroupCaret><Caret size={17} /></GroupCaret>
          CAD views
        </ViewGroup>
        <ViewItems>
          {cadViews.map((name) => (
            <ViewItem key={name}>{name}</ViewItem>
          ))}
        </ViewItems>
        <ViewGroup>
          <GroupCaret><Caret size={17} /></GroupCaret>
          Saved views
        </ViewGroup>
        <ViewItems>
          <ViewItem>No saved views created</ViewItem>
        </ViewItems>
      </ViewList>
      <Props>
        <PropTabs>
          <PropTab>Properties</PropTab>
        </PropTabs>
        <PropBody>
          <PropTable>
            <tbody>
              {properties.map(([label, value]) => (
                <tr key={label}>
                  <th scope="row">{label}</th>
                  <td>{value}</td>
                </tr>
              ))}
            </tbody>
          </PropTable>
          <ScrollTrack>
            <ScrollThumb />
          </ScrollTrack>
        </PropBody>
      </Props>
    </Panel>
  );
};

const ViewDock = () => (
  <Dock>
    <DockButton aria-label="Home view"><DockHome /></DockButton>
    <DockButton $menu $active aria-label="Orbit"><OrbitIcon /><Caret /></DockButton>
    <DockButton $menu aria-label="Shading"><SolidCube /><Caret /></DockButton>
    <ToolDivider $wide />
    <DockButton aria-label="Area select"><SelectIcon size={47} sw={1.400} /></DockButton>
    <DockButton $menu aria-label="Section"><SectionIcon /><Caret /></DockButton>
    <DockButton $menu aria-label="Isolate"><LayerCube /><Caret /></DockButton>
    <DockButton aria-label="Explode"><ExplodeIcon /></DockButton>
    <DockButton $active aria-label="Model tree"><NodesIcon /></DockButton>
    <DockButton aria-label="Focus"><FocusIcon /></DockButton>
    <DockButton aria-label="Settings"><Settings size={46} strokeWidth={1.300} /></DockButton>
    <DockButton aria-label="Compare"><OverlapIcon /><Caret /></DockButton>
  </Dock>
);

const App = () => (
  <Shell>
    <GlobalStyle />
    <SideNav />
    <Main>
      <TopBar />
      <Body>
        <DrivePanel />
        <Workspace>
          <MarkupBar />
          <Split>
            <ModelBrowser />
            <Stage>
              <QuadRotor />
              <ViewCube />
              <ViewDock />
              <Assistant aria-label="Assistant">
                <BotIcon id="bot-large" width={118} height={109} />
              </Assistant>
            </Stage>
          </Split>
        </Workspace>
        <SideRail>
          <SideButton aria-label="Tasks"><TaskIcon /></SideButton>
          <SideButton aria-label="Comments"><Bubble size={39} sw={2.500} /></SideButton>
          <SideButton aria-label="List"><ListIcon /></SideButton>
          <SideButton $off aria-label="Ideas"><BulbIcon /></SideButton>
          <SideDivider />
          <SideButton aria-label="Assistant messages">
            <BotIcon id="bot-small" width={43} height={40} />
            <Badge>3</Badge>
          </SideButton>
        </SideRail>
      </Body>
    </Main>
  </Shell>
);

export default App;
